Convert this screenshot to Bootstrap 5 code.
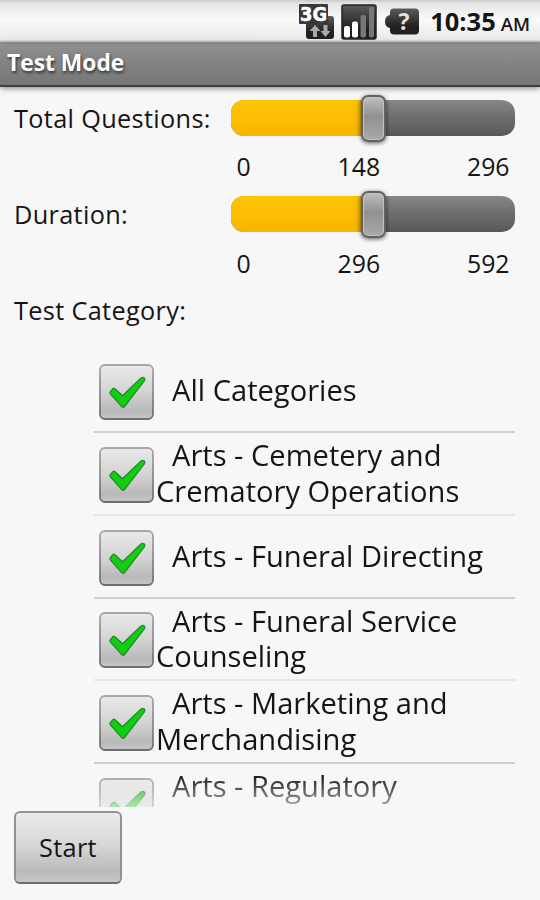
<!DOCTYPE html>
<html lang="en">
<head>
<meta charset="utf-8">
<meta name="viewport" content="width=device-width, initial-scale=1">
<title>Test Mode</title>
<link href="https://cdn.jsdelivr.net/npm/bootstrap@5.3.0/dist/css/bootstrap.min.css" rel="stylesheet">
<style>
body{width:540px;height:900px;background:#f7f7f7;color:#151515;font-family:"Open Sans","Noto Sans",sans-serif;font-size:24.8px;line-height:32px}
.status-bar{height:44px;padding:4px 10px 4px 0;background:linear-gradient(#c9cbc9 0,#e4e5e4 8%,#fafafa 45%,#e9e9e9 91%,#aaa 96%,#8b8b8b 100%)}
.clock{font-weight:700;font-size:25.5px;line-height:36px;margin-left:10px}
.clock span{font-size:18.5px;font-weight:600;margin-left:5px}
.title-bar{height:43px;padding-left:7px;background:linear-gradient(#8f8f8f,#767676);border-bottom:2px solid #3f3f3f;box-shadow:0 1px 6px rgba(0,0,0,.5);color:#fff;font-weight:700;font-size:22.8px;line-height:38px;text-shadow:1px 2px 3px #333}
.setting{height:96.5px;padding:0 25px 0 14px}
.setting-name{width:217px;padding-top:15px;font-size:25.3px;letter-spacing:.33px}
.setting + .setting .setting-name{padding-top:14px}
.setting + .setting .track{margin-top:12px}
.setting + .setting .scale{margin-top:15px}
.track{height:36px;margin-top:13px;border-radius:13px;background:linear-gradient(#858885,#707370 40%,#555855);position:relative}
.fill{height:100%;border-radius:13px 0 0 13px;background:linear-gradient(90deg,transparent 86%,rgba(120,80,0,.35)),linear-gradient(#fdc704,#f9b500)}
.thumb{position:absolute;left:130px;top:-5px;width:25px;height:47px;border:2px solid #626262;border-radius:7px;background:linear-gradient(#bfbfbf,#919191 45%,#a9a9a9);box-shadow:0 1px 4px rgba(0,0,0,.65),inset 0 0 1px 1px #c4c4c4}
.scale{padding:0 5.5px;margin-top:14px}
.setting-label{padding:14px 14px 0;font-size:25.3px;letter-spacing:.33px}
.category-list{height:456px;margin:24.5px 25px 0 94px;-webkit-mask-image:linear-gradient(#000 424px,transparent 472px);mask-image:linear-gradient(#000 424px,transparent 472px)}
.category{height:82.7px;border-bottom:2px solid #cfcfcf;padding-left:5px;font-size:29.1px;line-height:35.4px}
.category:nth-child(even){border-bottom-color:#e6e6e6}
.box{width:55px;height:56px;flex:none;margin:3px 2px 0 0}
.first-word{padding-left:16px}
.start-btn,.start-btn:hover{width:108px;height:73px;margin:4px 0 0 14px;border:2px solid #929292;border-bottom-color:#6c6c6c;border-radius:6px;background:linear-gradient(#e9eae9,#d7d8d7 45%,#b9bab9 85%,#c6c6c6);font-size:25.3px;letter-spacing:.3px;color:#151515;padding:2px 0 0}
</style>
<script src="https://cdn.jsdelivr.net/npm/bootstrap@5.3.0/dist/js/bootstrap.bundle.min.js"></script>
</head>
<body class="overflow-hidden d-flex flex-column">
<svg class="position-absolute" width="0" height="0">
 <defs>
  <linearGradient id="boxFill" x2="0" y2="1"><stop stop-color="#e9eae9"/><stop offset=".5" stop-color="#d2d3d2"/><stop offset=".85" stop-color="#b8b9b8"/><stop offset="1" stop-color="#c6c6c6"/></linearGradient>
  <linearGradient id="boxEdge" x2="0" y2="1"><stop stop-color="#a8a8a8"/><stop offset="1" stop-color="#6e6e6e"/></linearGradient>
  <linearGradient id="dark" x2="0" y2="1"><stop stop-color="#5b5b5b"/><stop offset=".7" stop-color="#202020"/></linearGradient>
  <symbol id="checked" viewBox="0 0 55 56">
   <rect x="1" y="1" width="53" height="54" rx="5" fill="url(#boxFill)" stroke="url(#boxEdge)" stroke-width="1.800"/>
   <path d="M11.500 27.500l2.500-3q1-.7 2 .3l7.500 7L42 14q1.700-1.300 3.300 0 1 1.200.2 2.600L25.500 42.500q-1.300 1.500-2.800.1L11.300 29.800q-.9-1.100.2-2.300z" fill="#0fd00f" stroke="#2a8a2a" stroke-width="1.300"/>
  </symbol>
 </defs>
</svg>
<header class="status-bar d-flex justify-content-end align-items-center flex-shrink-0">
 <svg width="122" height="38" viewBox="298 3 122 38">
  <rect x="306" y="16" width="28" height="23" rx="3" fill="url(#dark)"/>
  <rect x="299" y="4" width="29" height="20" rx="1" fill="#383838"/>
  <text x="300" y="21" font-family="DejaVu Sans" font-size="20" font-weight="700" fill="#fff" stroke="#fff" stroke-width=".6" textLength="27" lengthAdjust="spacingAndGlyphs">3G</text>
  <path d="M315 25l5.500 6h-3.500v6h-4v-6h-3.500zM325.500 37l-5-6h3v-6h4v6h3z" fill="#aaa"/>
  <rect x="342" y="5" width="34" height="34" rx="2" fill="url(#dark)" stroke="#222" stroke-width="1.500"/>
  <rect x="344" y="26" width="6" height="11.500" rx="2" fill="#fff"/><rect x="352" y="21.500" width="6" height="16" rx="2" fill="#fff"/>
  <rect x="360.500" y="15" width="5.500" height="22.500" rx="2" fill="#777"/><rect x="369" y="7" width="5" height="30.500" rx="2" fill="#777"/>
  <path d="M394 8.500h21q4 0 4 4v18q0 4-4 4h-21q-4 0-4-4v-2.500q-5-1-5-6.500t5-6.500v-2.500q0-4 4-4z" fill="url(#dark)"/>
  <text x="404" y="29.500" text-anchor="middle" font-size="23" font-weight="700" fill="#e6e2d6">?</text>
 </svg>
 <div class="clock text-nowrap">10:35<span>AM</span></div>
</header>
<div class="title-bar flex-shrink-0">Test Mode</div>
<main>
 <section class="setting d-flex">
  <div class="setting-name text-nowrap">Total Questions:</div>
  <div class="flex-grow-1">
   <div class="track"><div class="fill w-50"></div><div class="thumb"></div></div>
   <div class="scale d-flex justify-content-between"><span>0</span><span>148</span><span>296</span></div>
  </div>
 </section>
 <section class="setting d-flex">
  <div class="setting-name text-nowrap">Duration:</div>
  <div class="flex-grow-1">
   <div class="track"><div class="fill w-50"></div><div class="thumb"></div></div>
   <div class="scale d-flex justify-content-between"><span>0</span><span>296</span><span>592</span></div>
  </div>
 </section>
 <div class="setting-label">Test Category:</div>
 <div class="category-list overflow-hidden">
  <div class="category d-flex align-items-center"><svg class="box"><use href="#checked"/></svg><div class="text-nowrap"><span class="first-word">All Categories</span></div></div>
  <div class="category d-flex align-items-center"><svg class="box"><use href="#checked"/></svg><div class="text-nowrap"><span class="first-word">Arts - Cemetery and</span><br>Crematory Operations</div></div>
  <div class="category d-flex align-items-center"><svg class="box"><use href="#checked"/></svg><div class="text-nowrap"><span class="first-word">Arts - Funeral Directing</span></div></div>
  <div class="category d-flex align-items-center"><svg class="box"><use href="#checked"/></svg><div class="text-nowrap"><span class="first-word">Arts - Funeral Service</span><br>Counseling</div></div>
  <div class="category d-flex align-items-center"><svg class="box"><use href="#checked"/></svg><div class="text-nowrap"><span class="first-word">Arts - Marketing and</span><br>Merchandising</div></div>
  <div class="category d-flex align-items-center"><svg class="box"><use href="#checked"/></svg><div class="text-nowrap"><span class="first-word">Arts - Regulatory</span><br>&nbsp;</div></div>
 </div>
 <button type="button" class="btn start-btn">Start</button>
</main>
</body>
</html>
